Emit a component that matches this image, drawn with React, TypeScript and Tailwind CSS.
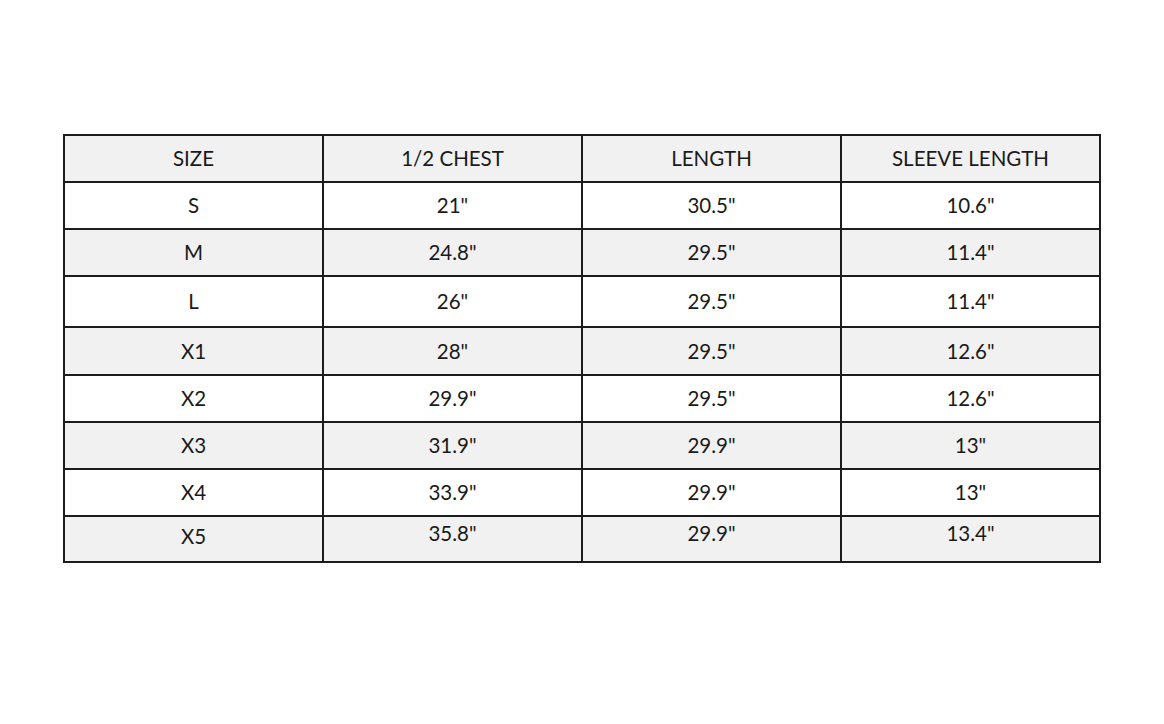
import React from "react";

const rows: { cells: string[]; h: string; gray: boolean; pad?: string[] }[] = [
  { cells: ["SIZE", "1/2 CHEST", "LENGTH", "SLEEVE LENGTH"], h: "h-[47px]", gray: true },
  { cells: ["S", '21"', '30.5"', '10.6"'], h: "h-[47px]", gray: false },
  { cells: ["M", '24.8"', '29.5"', '11.4"'], h: "h-[47px]", gray: true },
  { cells: ["L", '26"', '29.5"', '11.4"'], h: "h-[51px]", gray: false },
  { cells: ["X1", '28"', '29.5"', '12.6"'], h: "h-[48px]", gray: true },
  { cells: ["X2", '29.9"', '29.5"', '12.6"'], h: "h-[47px]", gray: false },
  { cells: ["X3", '31.9"', '29.9"', '13"'], h: "h-[47px]", gray: true },
  { cells: ["X4", '33.9"', '29.9"', '13"'], h: "h-[47px]", gray: false },
  {
    cells: ["X5", '35.8"', '29.9"', '13.4"'],
    h: "h-[46px]",
    gray: true,
    pad: ["pb-[5px]", "pb-[11px]", "pb-[11px]", "pb-[11px]"],
  },
];

export default function App() {
  return (
    <div className="w-[1164px] h-[724px] bg-white pt-[134px] pl-[63px]" style={{ fontFamily: "Lato, 'Noto Sans', sans-serif" }}>
      <div className="w-[1038px] border-t-2 border-l-2 border-[#1c1c1c]">
        {rows.map((r, i) => (
          <div key={i} className={`grid grid-cols-4 ${r.gray ? "bg-[#f1f1f1]" : "bg-white"}`}>
            {r.cells.map((c, j) => (
              <div
                key={j}
                className={`${r.h} flex items-center justify-center border-r-2 border-b-2 border-[#1c1c1c] text-[20.5px] text-[#1a1a1a] ${r.pad ? r.pad[j] : ""}`}
              >
                {c}
              </div>
            ))}
          </div>
        ))}
      </div>
    </div>
  );
}
